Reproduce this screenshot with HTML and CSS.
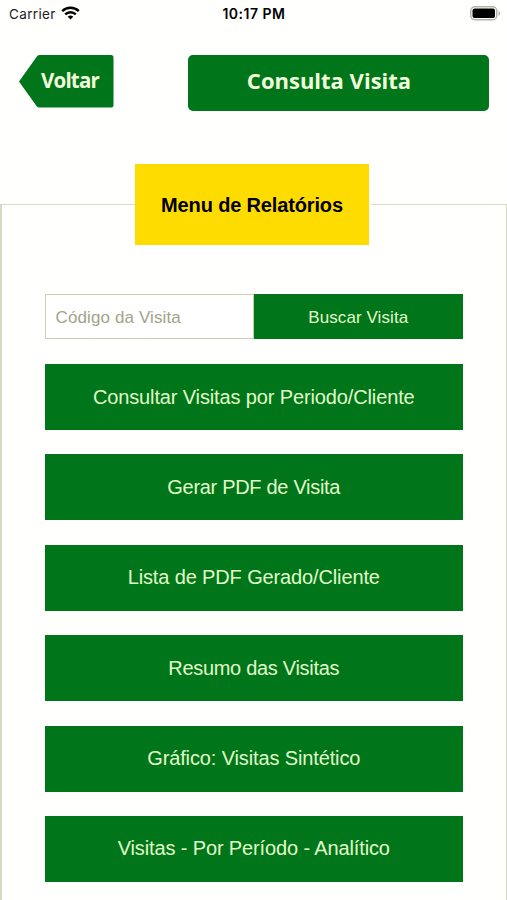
FILE: index.html
```html
<!DOCTYPE html>
<html lang="pt-BR">
<head>
<meta charset="utf-8">
<title>Consulta Visita</title>
<link rel="stylesheet" href="styles.css">
</head>
<body>
<div class="status">
  <div class="carrier"><span>Carrier</span>
    <svg class="wifi" width="19" height="14" viewBox="0 0 19 14" fill="none" stroke="#000" stroke-width="2.5"><path d="M1.2 5.1a12 12 0 0 1 16.6 0M4.2 8.3a7.6 7.6 0 0 1 10.6 0"/><path d="M9.5 13.6 6.7 10.8a4 4 0 0 1 5.6 0z" fill="#000" stroke="none"/></svg>
  </div>
  <div class="clock">10:17 PM</div>
  <svg class="battery" width="31" height="15" viewBox="0 0 31 15"><rect x=".75" y=".75" width="26" height="13" rx="4" fill="#fff" stroke="#b4b4aa" stroke-width="1.5"/><rect x="2.5" y="2.5" width="22.5" height="9.5" rx="2"/><path d="M28.5 5v5q1.7-.8 1.7-2.5T28.5 5z" fill="#b4b4aa"/></svg>
</div>
<header class="header">
  <a class="back"><svg width="95" height="53" viewBox="0 0 95 53"><path d="M20.5 0H92q2.500 0 2.500 2.500v47.500q0 2.500-2.500 2.500H20.500Q18.500 52.500 17.500 51L0 26.500 17.500 2Q18.500 0 20.500 0z" fill="#007519"/></svg><span>Voltar</span></a>
  <h1 class="title"><span>Consulta Visita</span></h1>
</header>
<fieldset class="panel">
  <legend class="legend"><span>Menu de Relatórios</span></legend>
  <div class="search">
    <input class="code" type="text" placeholder="Código da Visita">
    <button class="find"><span>Buscar Visita</span></button>
  </div>
  <nav class="menu">
    <button class="item"><span>Consultar Visitas por Periodo/Cliente</span></button>
    <button class="item tight"><span>Gerar PDF de Visita</span></button>
    <button class="item"><span>Lista de PDF Gerado/Cliente</span></button>
    <button class="item tight"><span>Resumo das Visitas</span></button>
    <button class="item"><span>Gráfico: Visitas Sintético</span></button>
    <button class="item"><span>Visitas - Por Período - Analítico</span></button>
  </nav>
</fieldset>
</body>
</html>
```
FILE: styles.css
```css
* { box-sizing: border-box; }
html, body { margin: 0; height: 900px; overflow: hidden; }
body { display: flex; flex-direction: column; background: #fffffe; font-family: "Liberation Sans", Arial, sans-serif; color: #000; }
button { border: 0; border-radius: 0; background: #007519; color: #e0fbc9; font-family: inherit; padding: 0; }
.status { display: grid; grid-template-columns: 1fr auto 1fr; align-items: center; height: 27px; padding: 0 6px 0 9px; font-family: Inter, sans-serif; font-size: 13.5px; }
.carrier { display: flex; align-items: center; gap: 5px; color: #222; letter-spacing: .35px; }
.wifi { margin-top: -2px; }
.clock { margin-left: -2px; font-weight: 600; font-size: 14px; letter-spacing: .5px; }
.battery { justify-self: end; margin-top: -1px; }
.header { display: flex; justify-content: space-between; align-items: flex-start; padding: 27.500px 18px 0 19px; font-family: "Open Sans", "Noto Sans", sans-serif; color: #f1ffdc; }
.back { display: grid; width: 95px; height: 53px; }
.back > * { grid-area: 1 / 1; }
.back span { align-self: center; padding: 0 0 3px 22px; font-size: 20.5px; font-weight: 700; letter-spacing: -.8px; }
.title { display: grid; place-items: center; width: 301px; height: 56px; margin: 0; padding: 0 19px 6px 0; border-radius: 5px; background: #007519; font-size: 22px; font-weight: 700; }
.panel { flex: 1; margin: 53.500px 0 0; min-width: 0; padding: 49px 42.500px 0 42.500px; border: 2px solid #d9d9c8; border-top-width: 1.500px; border-right-width: 1px; border-bottom: 0; }
.legend { display: grid; place-items: center; position: relative; left: -2px; width: 233.500px; height: 81px; margin: 0 auto; padding: 2px 0 0; background: #ffdc00; font-size: 20px; font-weight: 700; letter-spacing: -.15px; }
.search { display: flex; height: 45px; width: 418.500px; }
.code { width: 209px; height: 45px; padding: 2px 10px 0; border: 1.500px solid #cbcfb0; border-radius: 0; background: #fff; font: 17px "Liberation Sans", Arial, sans-serif; letter-spacing: .12px; }
.code::placeholder { color: #a3a388; opacity: 1; }
.find { flex: 1; padding-top: 2px; font-size: 17px; letter-spacing: .08px; }
.menu { display: grid; grid-auto-rows: 66px; gap: 24.400px; width: 418.500px; margin-top: 25px; }
.item { font-size: 20px; letter-spacing: -.13px; }
.tight { letter-spacing: -.3px; }
```
